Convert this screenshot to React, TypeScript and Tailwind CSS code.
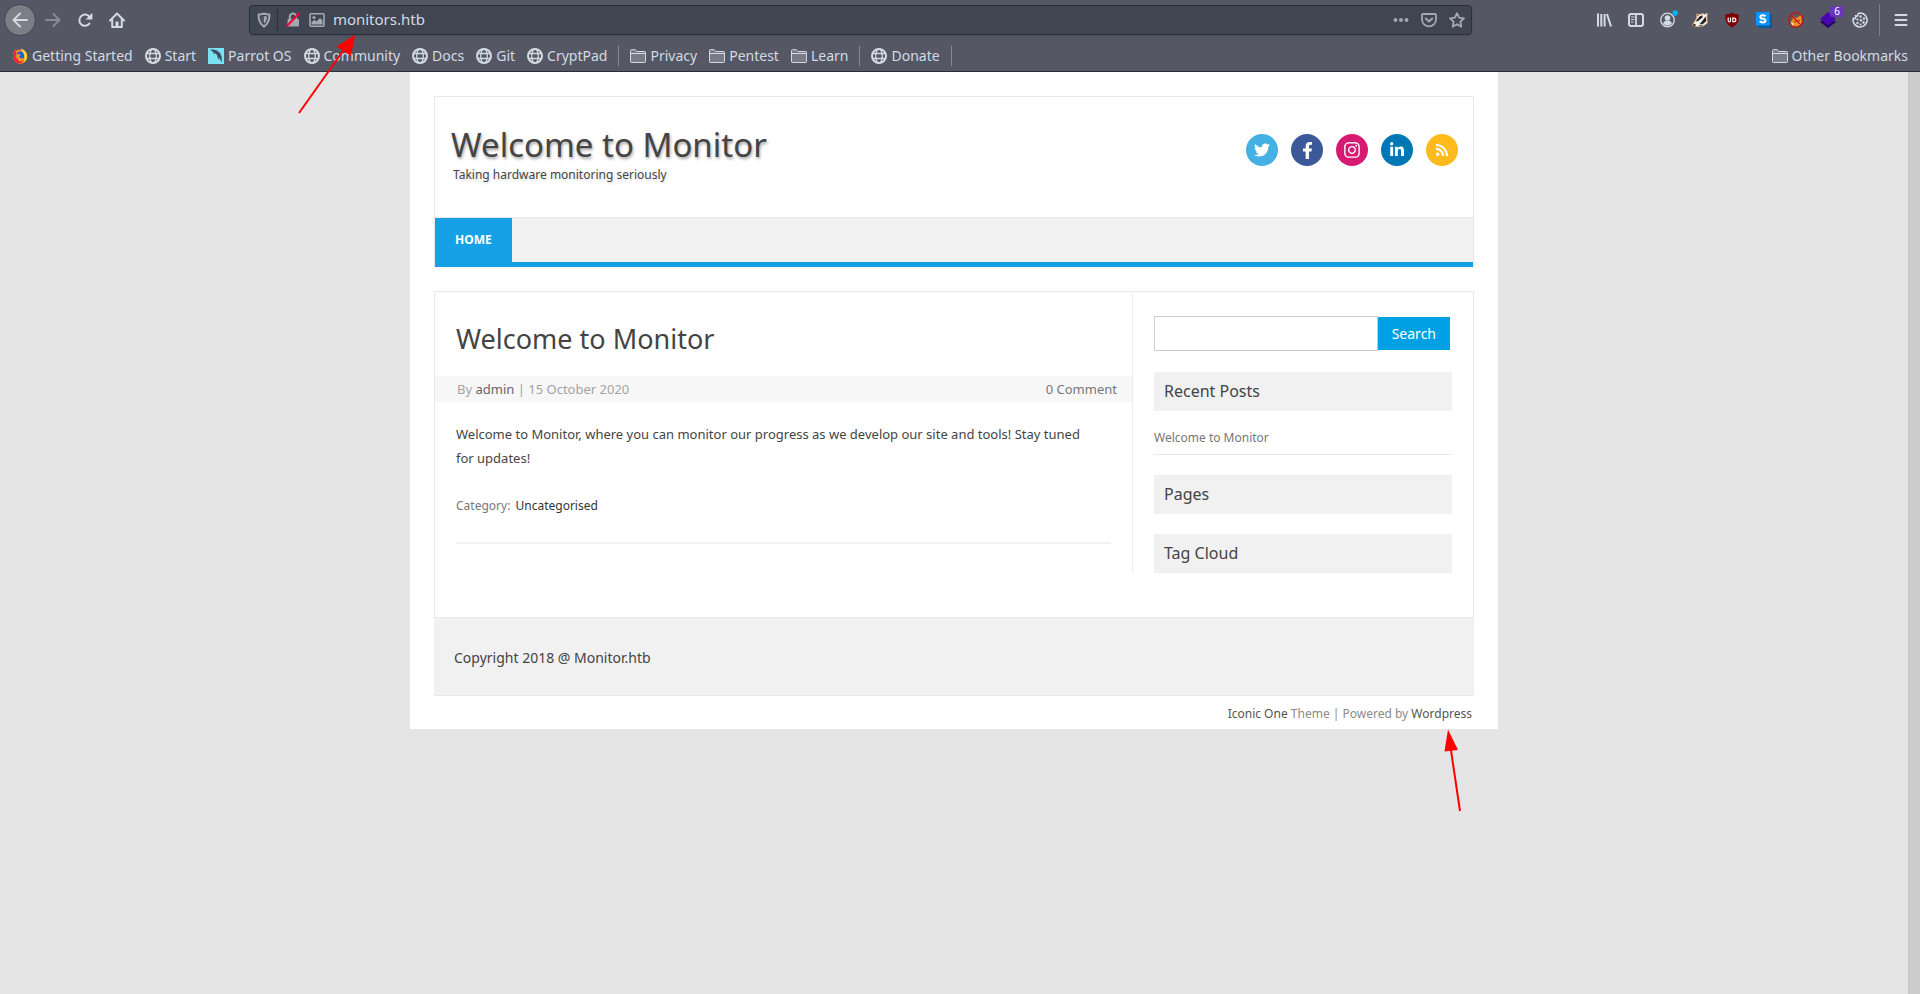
import type { ReactNode } from "react";
import { FaTwitter, FaFacebookF, FaInstagram, FaLinkedinIn, FaRss } from "react-icons/fa";

const stroke = { fill: "none", stroke: "currentColor", strokeWidth: 2 } as const;

function Icon({ children }: { children: ReactNode }) {
  return (
    <svg viewBox="0 0 16 16" className="size-4 shrink-0" aria-hidden="true">
      {children}
    </svg>
  );
}

const BackIcon = () => (
  <Icon>
    <path d="M15 8H2M8 1.5 1.5 8 8 14.5" {...stroke} strokeLinecap="round" strokeLinejoin="round" />
  </Icon>
);

const ForwardIcon = () => (
  <Icon>
    <path d="M1 8h13M8.5 2l6 6-6 6" {...stroke} strokeLinecap="round" strokeLinejoin="round" />
  </Icon>
);

const ReloadIcon = () => (
  <Icon>
    <path d="M12.4 11.6A5.6 5.6 0 1 1 12.6 5" {...stroke} strokeLinecap="round" />
    <path d="M15.4.8v6.7H8.7z" fill="currentColor" />
  </Icon>
);

const HomeIcon = () => (
  <Icon>
    <path d="M1 8.5 8 1.5l7 7M3.2 7.5V15h9.6V7.5" {...stroke} strokeLinecap="round" strokeLinejoin="round" />
    <path d="M6.5 9.5h3V15h-3z" fill="currentColor" />
  </Icon>
);

const ShieldIcon = () => (
  <Icon>
    <path d="M8 1.5c2 .8 3.7 1 5.5 1.1 0 5.6-1.5 9.7-5.5 11.9-4-2.2-5.5-6.3-5.5-11.9C4.3 2.5 6 2.3 8 1.5z" {...stroke} strokeLinejoin="round" />
    <path d="M8 4.3v7.4c-2-1.600-2.900-4-3-7.200 1-.1 2-.1 3-.2z" fill="currentColor" opacity=".25" />
    <path d="M8 4.300v7.400c2-1.600 2.900-4 3-7.200-1-.1-2-.1-3-.2z" fill="currentColor" />
  </Icon>
);

const LockIcon = () => (
  <Icon>
    <path d="M4.8 7V4.8a3.200 3.200 0 0 1 6.400 0V7" {...stroke} />
    <rect x="2.5" y="7" width="11.5" height="7.5" rx="1" fill="currentColor" />
    <path d="M1.5 14.5 14.5 1" stroke="#ff0039" strokeWidth="2" />
  </Icon>
);

const ImageIcon = () => (
  <Icon>
    <rect x="1" y="1.7" width="14" height="12.6" rx="1" {...stroke} strokeWidth="1.6" />
    <circle cx="5" cy="5.5" r="1.6" fill="currentColor" />
    <path d="M2.5 12.500V10l3-2 2 1.500L11 6l2.500 2.500v4z" fill="currentColor" />
  </Icon>
);

const DotsIcon = () => (
  <Icon>
    <g fill="currentColor">
      <circle cx="2.5" cy="8" r="2" />
      <circle cx="8" cy="8" r="2" />
      <circle cx="13.5" cy="8" r="2" />
    </g>
  </Icon>
);

const PocketIcon = () => (
  <Icon>
    <path d="M2 2h12a1 1 0 0 1 1 1v4.500a7 6.800 0 0 1-14 0V3a1 1 0 0 1 1-1z" {...stroke} strokeWidth="1.8" />
    <path d="m4.800 6.500 3.200 3 3.200-3" {...stroke} strokeLinecap="round" strokeLinejoin="round" />
  </Icon>
);

const StarIcon = () => (
  <Icon>
    <path d="m8 1.200 2.100 4.500 4.900.6-3.600 3.400.9 4.900L8 12.200l-4.300 2.400.9-4.900L1 6.300l4.900-.6z" {...stroke} strokeWidth="1.8" strokeLinejoin="round" />
  </Icon>
);

const LibraryIcon = () => (
  <Icon>
    <path d="M2 1.500v13M5.300 2v12.500M8.600 2v12.500M11 2l4 12.500" {...stroke} />
  </Icon>
);

const SidebarIcon = () => (
  <Icon>
    <rect x="1" y="2" width="14" height="12" rx="2" {...stroke} />
    <path d="M8 2v12" {...stroke} strokeWidth="1.8" />
    <path d="M3 5h3.500M3 7.500h3.500M3 10h2.500" {...stroke} strokeWidth="1.2" />
  </Icon>
);

const AccountIcon = () => (
  <svg viewBox="0 0 20 20" className="size-5" aria-hidden="true">
    <circle cx="9.5" cy="10" r="6.8" {...stroke} strokeWidth="1.3" />
    <circle cx="9.5" cy="8" r="2.8" fill="currentColor" />
    <path d="M5 13.300c1-2 2-2.500 4.500-2.500s3.500.5 4.500 2.500a5.500 5.500 0 0 1-9 0z" fill="currentColor" />
    <circle cx="17.2" cy="3" r="2.7" fill="#00b3f4" />
  </svg>
);

const BadgerIcon = () => (
  <Icon>
    <path d="M.5 13 4.500 6 4.300 2 7.500 2.500 11 1.500l1.500.8 3-1.300-.5 4.500.5 5.500-4 3-5 .8L2 14.500z" fill="#f6f2ec" stroke="#d18a52" strokeWidth=".7" />
    <path d="M10.500 3.300 7.500 4.500 3.500 9.500 6 9l4.500-3.500z" fill="#1d1d1d" />
    <path d="M13.500 4.500 14.300 9l-3 2.800-3.800.4 3-3.400z" fill="#1d1d1d" />
    <path d="M.8 12.800l2.400-1 .6 1.800-1.800.8zM5.200 2.800l1.300.3-1.200 1.500z" fill="#1d1d1d" />
    <path d="M7 13.700l4-.7" stroke="#1d1d1d" strokeWidth=".7" />
  </Icon>
);

const UblockIcon = () => (
  <Icon>
    <path d="M8 .5c2 1.500 4.200 2 6.800 2 0 6.500-.8 9.800-6.800 13C2 12.300 1.200 9 1.200 2.500 3.800 2.500 6 2 8 .5z" fill="#800000" />
    <path d="M4.200 5.500v3.300q0 1.200 1.100 1.200t1.200-1.200V5.500" fill="none" stroke="#fff" strokeWidth="1.2" />
    <path d="M8.800 6.100h.8q2.200 0 2.200 1.800t-2.200 1.800h-.8z" fill="none" stroke="#fff" strokeWidth="1.2" />
  </Icon>
);

const StylusIcon = () => (
  <Icon>
    <path d="M1 13l2 3h13V3l-3-2z" fill="#015a9c" />
    <rect x="0" y="0" width="13.5" height="13.5" fill="#0a94ff" />
    <path d="M9.500 4.300Q8.500 3.300 6.700 3.300q-2.400 0-2.400 1.600t2.500 1.900q2.600.3 2.600 1.900 0 1.700-2.700 1.700-1.900 0-3-1.100" fill="none" stroke="#fff" strokeWidth="2" />
  </Icon>
);

const FoxIcon = () => (
  <Icon>
    <path d="M2.500 10 4.500 7.500 5 4l3.500 2.200L13 2.500l.8 6L13 12l-4 2.500-5-.5z" fill="#f08a1d" />
    <path d="m3 10 3.500 2L4 13.500zM9.500 12l3.500-2.500-1 3.500z" fill="#f7d9b5" />
    <circle cx="7" cy="9.500" r=".7" fill="#5b2a08" />
    <circle cx="11" cy="8.500" r=".7" fill="#5b2a08" />
    <circle cx="8" cy="8" r="7.3" fill="none" stroke="#c8140e" strokeWidth="1.3" />
    <path d="M3 3l10 10" stroke="#c8140e" strokeWidth="1.4" />
  </Icon>
);

const LayersIcon = () => (
  <Icon>
    <path d="M0 10 8 4.500l8 5.500-8 6z" fill="#20085e" />
    <path d="M0 7 8 0l8 7-8 6.500z" fill="#4b06b4" />
  </Icon>
);

const CookieIcon = () => (
  <Icon>
    <path d="M8.500 1a7 7 0 1 1-7.200 5.200l1.800.5.800-1.700L3.500 3.700 5.500 4 6.300 1.500z" {...stroke} strokeWidth="1.6" strokeLinejoin="round" />
    <g fill="currentColor">
      <circle cx="8.500" cy="4.500" r="1.2" />
      <circle cx="12" cy="6.500" r="1.2" />
      <circle cx="5.500" cy="7.500" r="1.1" />
      <circle cx="9" cy="8.300" r="1.2" />
      <circle cx="5.500" cy="11" r="1.2" />
      <circle cx="11.500" cy="10.500" r="1.2" />
      <circle cx="8.500" cy="12.500" r="1" />
    </g>
  </Icon>
);

const MenuIcon = () => (
  <Icon>
    <path d="M2.500 3h11M2.500 8h11M2.500 13h11" {...stroke} strokeLinecap="round" />
  </Icon>
);

const GlobeIcon = () => (
  <Icon>
    <circle cx="8" cy="8" r="7" {...stroke} />
    <ellipse cx="8" cy="8" rx="3.3" ry="7" {...stroke} strokeWidth="1.3" />
    <path d="M1.500 5.500h13M1.500 10.500h13" {...stroke} strokeWidth="1.3" />
  </Icon>
);

const FolderIcon = () => (
  <Icon>
    <path d="M.5 13.800V2.500q0-.8.8-.8h4l1.500 1.800h7.900q.8 0 .8.800v9.500q0 .7-.8.700H1.300q-.8 0-.8-.7z" fill="#777b86" stroke="currentColor" />
    <path d="M.5 5.500h15" stroke="currentColor" />
  </Icon>
);

const FirefoxIcon = () => (
  <Icon>
    <circle cx="8" cy="8.5" r="7" fill="#ff7a1a" />
    <path d="M1 8.500C1 5 2 3 3.500 1.500L5 4l5-2.500C14 3 15.500 6 15 10c-.7 3.500-3.500 5.500-7 5.500-4 0-7-3-7-7z" fill="#ff980e" />
    <path d="M1 8C1 5 2 3 3.300 1.800L4.500 5 3.500 9l4 4.500 5-1-4.500 3C4 15.500 1 12.500 1 8z" fill="#f0204a" />
    <circle cx="8.5" cy="7.5" r="4" fill="#1565d8" />
    <path d="M9 .5c3 1 6.800 4 6 9-.5 2.500-2 4-3.500 4.800C13 11 13 8 11.500 5.500z" fill="#ffd83b" />
    <path d="M4.500 6.500c1.500-1 3-.5 4 .5L7 8.500l1.500 2 3-.5c-1 2-3.500 2.500-5 1.300C5 10.300 4.200 8.500 4.500 6.500z" fill="#ff9a16" />
  </Icon>
);

const ParrotIcon = () => (
  <Icon>
    <path d="M0 0h16v16H0z" fill="#78e2f2" />
    <path d="M2 1.500C6 1 9.500 2 12 5c1.500 2 2 5 1.800 9.500L11 9.500l-.8 2.500L9 7 6.500 4.500 7 7 4.500 3.500z" fill="#3f4a63" />
  </Icon>
);

function ToolButton({ label, children, className = "" }: { label: string; children: ReactNode; className?: string }) {
  return (
    <button type="button" aria-label={label} className={`relative flex size-8 shrink-0 items-center justify-center ${className}`}>
      {children}
    </button>
  );
}

function Bookmark({ icon, children }: { icon: ReactNode; children: ReactNode }) {
  return (
    <a href="#" className="flex items-center gap-1 whitespace-nowrap">
      {icon}
      {children}
    </a>
  );
}

const Divider = () => <span className="-mx-px h-5 w-px bg-[#878b95]" />;

function BrowserChrome() {
  return (
    <header className="h-18 border-b border-[#2b2e3b] bg-[#555864] font-['Noto_Sans',sans-serif] text-sm text-[#d3dae3]">
      <div className="flex h-10 items-center pr-[3px] pl-1">
        <ToolButton label="Back" className="mr-px rounded-full border border-[#42454f] bg-[#7b7e85]"><BackIcon /></ToolButton>
        <ToolButton label="Forward" className="text-[#878b95]"><ForwardIcon /></ToolButton>
        <ToolButton label="Reload"><ReloadIcon /></ToolButton>
        <ToolButton label="Home"><HomeIcon /></ToolButton>
        <div className="flex-[117]" />
        <div className="relative flex h-[30px] flex-[1221] items-center rounded border border-[#2b2e3b] bg-[#404552] px-1.5 text-[#a3a8b3] shadow">
          <span className="flex w-[22px] border-r border-[#2b2e3b] py-[3px]"><ShieldIcon /></span>
          <span className="ml-[7px] flex gap-2">
            <LockIcon />
            <ImageIcon />
          </span>
          <input aria-label="Address" defaultValue="monitors.htb" className="ml-2 min-w-0 flex-1 bg-transparent text-[15px] text-[#d3dae3] outline-none" />
          <span className="flex gap-3">
            <button type="button" aria-label="Page actions"><DotsIcon /></button>
            <button type="button" aria-label="Save to Pocket"><PocketIcon /></button>
            <button type="button" aria-label="Bookmark this page"><StarIcon /></button>
          </span>
          <svg viewBox="0 0 60 82" className="pointer-events-none absolute top-[27px] left-[47px] z-10 h-[82px] w-[60px]" aria-hidden="true">
            <path d="M2 80 46 18" stroke="#f00" strokeWidth="2" />
            <path d="M58 2 54 23 39.500 13.500z" fill="#f00" />
          </svg>
        </div>
        <div className="flex-[117]" />
        <div className="flex items-center">
          <ToolButton label="Library"><LibraryIcon /></ToolButton>
          <ToolButton label="Sidebars"><SidebarIcon /></ToolButton>
          <ToolButton label="Account"><AccountIcon /></ToolButton>
          <ToolButton label="Privacy Badger"><BadgerIcon /></ToolButton>
          <ToolButton label="uBlock Origin"><UblockIcon /></ToolButton>
          <ToolButton label="Stylus"><StylusIcon /></ToolButton>
          <ToolButton label="FoxyProxy"><FoxIcon /></ToolButton>
          <ToolButton label="Wappalyzer">
            <LayersIcon />
            <span className="absolute top-0.5 right-0 rounded-xs bg-[#6a35bb] px-1 text-[10px] leading-[11px] text-white">6</span>
          </ToolButton>
          <ToolButton label="Cookies"><CookieIcon /></ToolButton>
          <span className="mr-[5px] ml-[3px] h-8 w-px bg-[#7d818c]" />
          <ToolButton label="Menu"><MenuIcon /></ToolButton>
        </div>
      </div>
      <nav aria-label="Bookmarks" className="flex items-center gap-3 px-3 pt-1.5">
        <Bookmark icon={<FirefoxIcon />}>Getting Started</Bookmark>
        <Bookmark icon={<GlobeIcon />}>Start</Bookmark>
        <Bookmark icon={<ParrotIcon />}>Parrot OS</Bookmark>
        <Bookmark icon={<GlobeIcon />}>Community</Bookmark>
        <Bookmark icon={<GlobeIcon />}>Docs</Bookmark>
        <Bookmark icon={<GlobeIcon />}>Git</Bookmark>
        <Bookmark icon={<GlobeIcon />}>CryptPad</Bookmark>
        <Divider />
        <Bookmark icon={<FolderIcon />}>Privacy</Bookmark>
        <Bookmark icon={<FolderIcon />}>Pentest</Bookmark>
        <Bookmark icon={<FolderIcon />}>Learn</Bookmark>
        <Divider />
        <Bookmark icon={<GlobeIcon />}>Donate</Bookmark>
        <Divider />
        <div className="flex-1" />
        <Bookmark icon={<FolderIcon />}>Other Bookmarks</Bookmark>
      </nav>
    </header>
  );
}

function Social({ label, className, children }: { label: string; className: string; children: ReactNode }) {
  return (
    <a href="#" aria-label={label} className={`flex size-8 items-center justify-center rounded-full text-white ${className}`}>
      {children}
    </a>
  );
}

function WidgetTitle({ children, className }: { children: ReactNode; className: string }) {
  return <h3 className={`bg-[#f1f1f1] px-2.5 text-base leading-[39px] ${className}`}>{children}</h3>;
}

function Site() {
  return (
    <div className="relative mx-auto w-full max-w-[1088px] bg-white px-6 pt-6 pb-[5px] text-[#444]">
      <div className="border-x border-t border-[#e8e8e8]">
        <div className="flex items-start justify-between pt-7 pr-[15px] pb-[34px] pl-4">
          <div>
            <h1 className="text-[33px] leading-10 text-shadow-[1px_2px_3px_rgb(0_0_0/0.35)]"><a href="#">Welcome to Monitor</a></h1>
            <p className="mt-0.5 pl-0.5 text-[12px] leading-4 text-shadow-[1px_2px_3px_rgb(0_0_0/0.15)]">Taking hardware monitoring seriously</p>
          </div>
          <div className="mt-[9px] flex gap-[13px]">
            <Social label="Twitter" className="bg-[#45b0e3]"><FaTwitter size={16} /></Social>
            <Social label="Facebook" className="bg-[#3b5998]"><FaFacebookF size={17} /></Social>
            <Social label="Instagram" className="bg-[#d81b72]"><FaInstagram size={18} /></Social>
            <Social label="LinkedIn" className="bg-[#0077b5]"><FaLinkedinIn size={16} /></Social>
            <Social label="RSS" className="bg-[#ffba1c]"><FaRss size={14} /></Social>
          </div>
        </div>
        <nav aria-label="Main" className="flex border-t border-b-5 border-t-[#e8e8e8] border-b-[#16a1e7] bg-[#f2f2f2]">
          <a href="#" className="bg-[#16a1e7] px-5 text-[12px] leading-11 font-bold text-white">HOME</a>
        </nav>
      </div>

      <div className="mt-6 border-x border-t border-[#e8e8e8] pb-11">
        <div className="grid grid-cols-[698fr_340fr]">
          <article className="border-r border-[#ededed] pt-[29px] pb-7">
            <h2 className="px-[21px] text-[27px] leading-9">Welcome to Monitor</h2>
            <div className="mt-[19px] flex justify-between bg-[#f7f7f7] pr-[15px] pl-[22px] text-[13px] leading-[26px] text-[#a3a3a3]">
              <span>By <a href="#" className="text-[#666]">admin</a> | 15 October 2020</span>
              <a href="#" className="text-[#777]">0 Comment</a>
            </div>
            <div className="px-[21px]">
              <p className="mt-5 text-[13px] leading-6">
                Welcome to Monitor, where you can monitor our progress as we develop our site and tools! Stay tuned<br />for updates!
              </p>
              <p className="mt-6 border-b-2 border-[#f1f1f1] pb-6 text-[12px] leading-6 text-[#777]">
                Category: <a href="#" className="ml-0.5 text-[#333]">Uncategorised</a>
              </p>
            </div>
          </article>
          <aside className="px-[21px] pt-6">
            <form role="search" className="flex items-center pr-0.5">
              <input aria-label="Search" className="h-[35px] min-w-0 flex-1 border border-[#ccc] px-2 text-sm" />
              <button type="submit" className="h-[33px] bg-[#00a1e4] px-3.5 text-[14px] text-white">Search</button>
            </form>
            <WidgetTitle className="mt-[21px]">Recent Posts</WidgetTitle>
            <ul className="mt-[17px] border-b border-[#e8e8e8] pb-1.5 text-[12px] leading-5 text-[#777]">
              <li><a href="#">Welcome to Monitor</a></li>
            </ul>
            <WidgetTitle className="mt-5">Pages</WidgetTitle>
            <WidgetTitle className="mt-5">Tag Cloud</WidgetTitle>
          </aside>
        </div>
      </div>

      <footer>
        <div className="border-y border-[#e8e8e8] bg-[#f1f1f1] px-5 pt-7 pb-[25px] text-[14px] leading-6">Copyright 2018 @ Monitor.htb</div>
        <p className="mt-2 pr-0.5 text-right text-[12px] leading-5 text-[#8a8a8a]">
          <a href="#" className="text-[#555]">Iconic One</a> Theme | Powered by <a href="#" className="text-[#555]">Wordpress</a>
        </p>
      </footer>

      <svg viewBox="0 0 24 84" className="pointer-events-none absolute top-full right-[34px] h-[84px] w-6" aria-hidden="true">
        <path d="M10.500 18 20 82" stroke="#f00" strokeWidth="2" />
        <path d="M8 .5 18 21 4.500 22.500z" fill="#f00" />
      </svg>
    </div>
  );
}

export default function App() {
  return (
    <div className="flex min-h-screen flex-col bg-[#e5e5e5]">
      <BrowserChrome />
      <div className="flex flex-1">
        <main className="flex-1 font-['Noto_Sans',sans-serif]"><Site /></main>
        <div className="w-3 border-l border-[#c4c4c0] bg-[#cdcdcd]" />
      </div>
    </div>
  );
}
